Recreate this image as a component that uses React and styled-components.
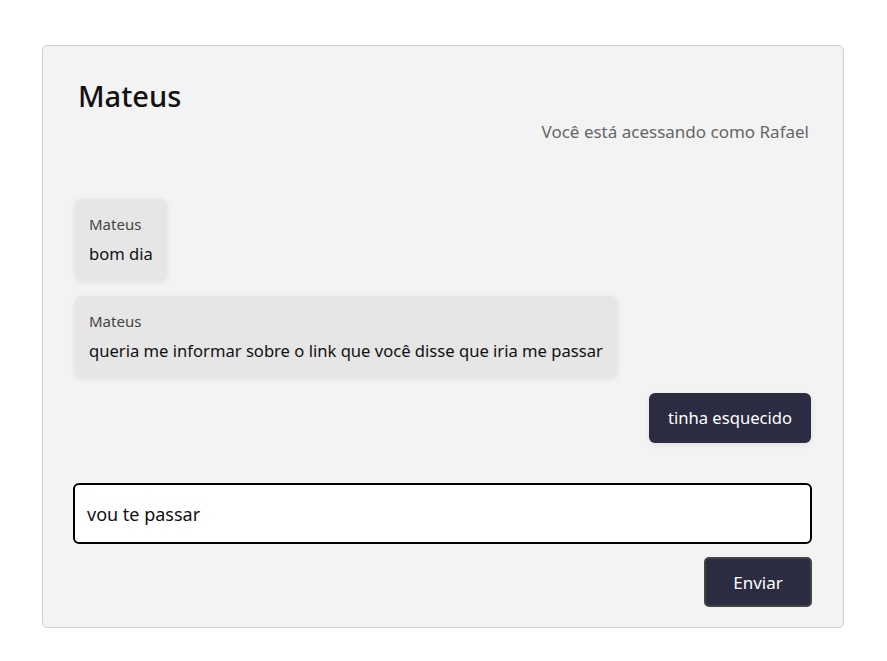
import React from 'react'
import styled, { createGlobalStyle } from 'styled-components'

const Global = createGlobalStyle`
  body {
    margin: 0;
    background: #ffffff;
    font-family: "Noto Sans", Lato, sans-serif;
  }
`

const messages = [
  { id: 1, author: 'Mateus', text: 'bom dia', mine: false },
  { id: 2, author: 'Mateus', text: 'queria me informar sobre o link que você disse que iria me passar', mine: false },
  { id: 3, author: 'Rafael', text: 'tinha esquecido', mine: true },
]

function App() {
  return (
    <>
      <Global />
      <Page>
        <Card>
          <Header>
            <Title>Mateus</Title>
            <Subtitle>Você está acessando como Rafael</Subtitle>
          </Header>
          <List>
            {messages.map(m => (
              <Bubble key={m.id} mine={m.mine}>
                {!m.mine && <Author>{m.author}</Author>}
                <Text>{m.text}</Text>
              </Bubble>
            ))}
          </List>
          <Form>
            <Input defaultValue="vou te passar" />
            <SendButton>Enviar</SendButton>
          </Form>
        </Card>
      </Page>
    </>
  )
}

export default App

const Page = styled.div`
  padding: 45px 43px 0 42px;
`

const Card = styled.div`
  box-sizing: border-box;
  width: 802px;
  height: 583px;
  background: #f3f3f3;
  border: 1px solid #cfcfcf;
  border-radius: 5px;
  padding: 30px 31px 19px 30px;
  display: flex;
  flex-direction: column;
`

const Header = styled.div`
  display: flex;
  flex-direction: column;
  padding: 0 3px 0 5px;
`

const Title = styled.h1`
  margin: 0;
  font-size: 29px;
  font-weight: 500;
  color: #111;
  line-height: 40px;
`

const Subtitle = styled.div`
  align-self: flex-end;
  margin-top: 5px;
  font-size: 17px;
  color: #666;
  line-height: 22px;
`

const List = styled.div`
  display: flex;
  flex-direction: column;
  gap: 16px;
  margin-top: 56px;
  padding: 0 1px 0 2px;
`

const Bubble = styled.div`
  align-self: ${p => (p.mine ? 'flex-end' : 'flex-start')};
  background: ${p => (p.mine ? '#2b2b42' : '#e6e6e6')};
  color: ${p => (p.mine ? '#fff' : '#111')};
  border-radius: 6px;
  padding: ${p => (p.mine ? '14px 19px' : '15px 14px 15px')};
  box-shadow: 0 2px 6px rgba(0, 0, 0, 0.08);
  display: flex;
  flex-direction: column;
  gap: 8px;
`

const Author = styled.div`
  font-size: 15px;
  color: #444;
  line-height: 21px;
`

const Text = styled.div`
  font-size: 16.6px;
  line-height: 22px;
`

const Form = styled.div`
  display: flex;
  flex-direction: column;
  align-items: flex-end;
  gap: 13px;
  margin-top: 40px;
`

const Input = styled.input`
  box-sizing: border-box;
  width: 100%;
  height: 61px;
  border: 2px solid #000;
  border-radius: 6px;
  background: #fff;
  padding: 0 12px;
  font-family: inherit;
  font-size: 18px;
  color: #111;
  outline: none;
`

const SendButton = styled.button`
  box-sizing: border-box;
  width: 108px;
  height: 50px;
  background: #2b2b42;
  border: 2px solid #444;
  border-radius: 5px;
  color: #fff;
  font-family: inherit;
  font-size: 17px;
  cursor: pointer;
`
